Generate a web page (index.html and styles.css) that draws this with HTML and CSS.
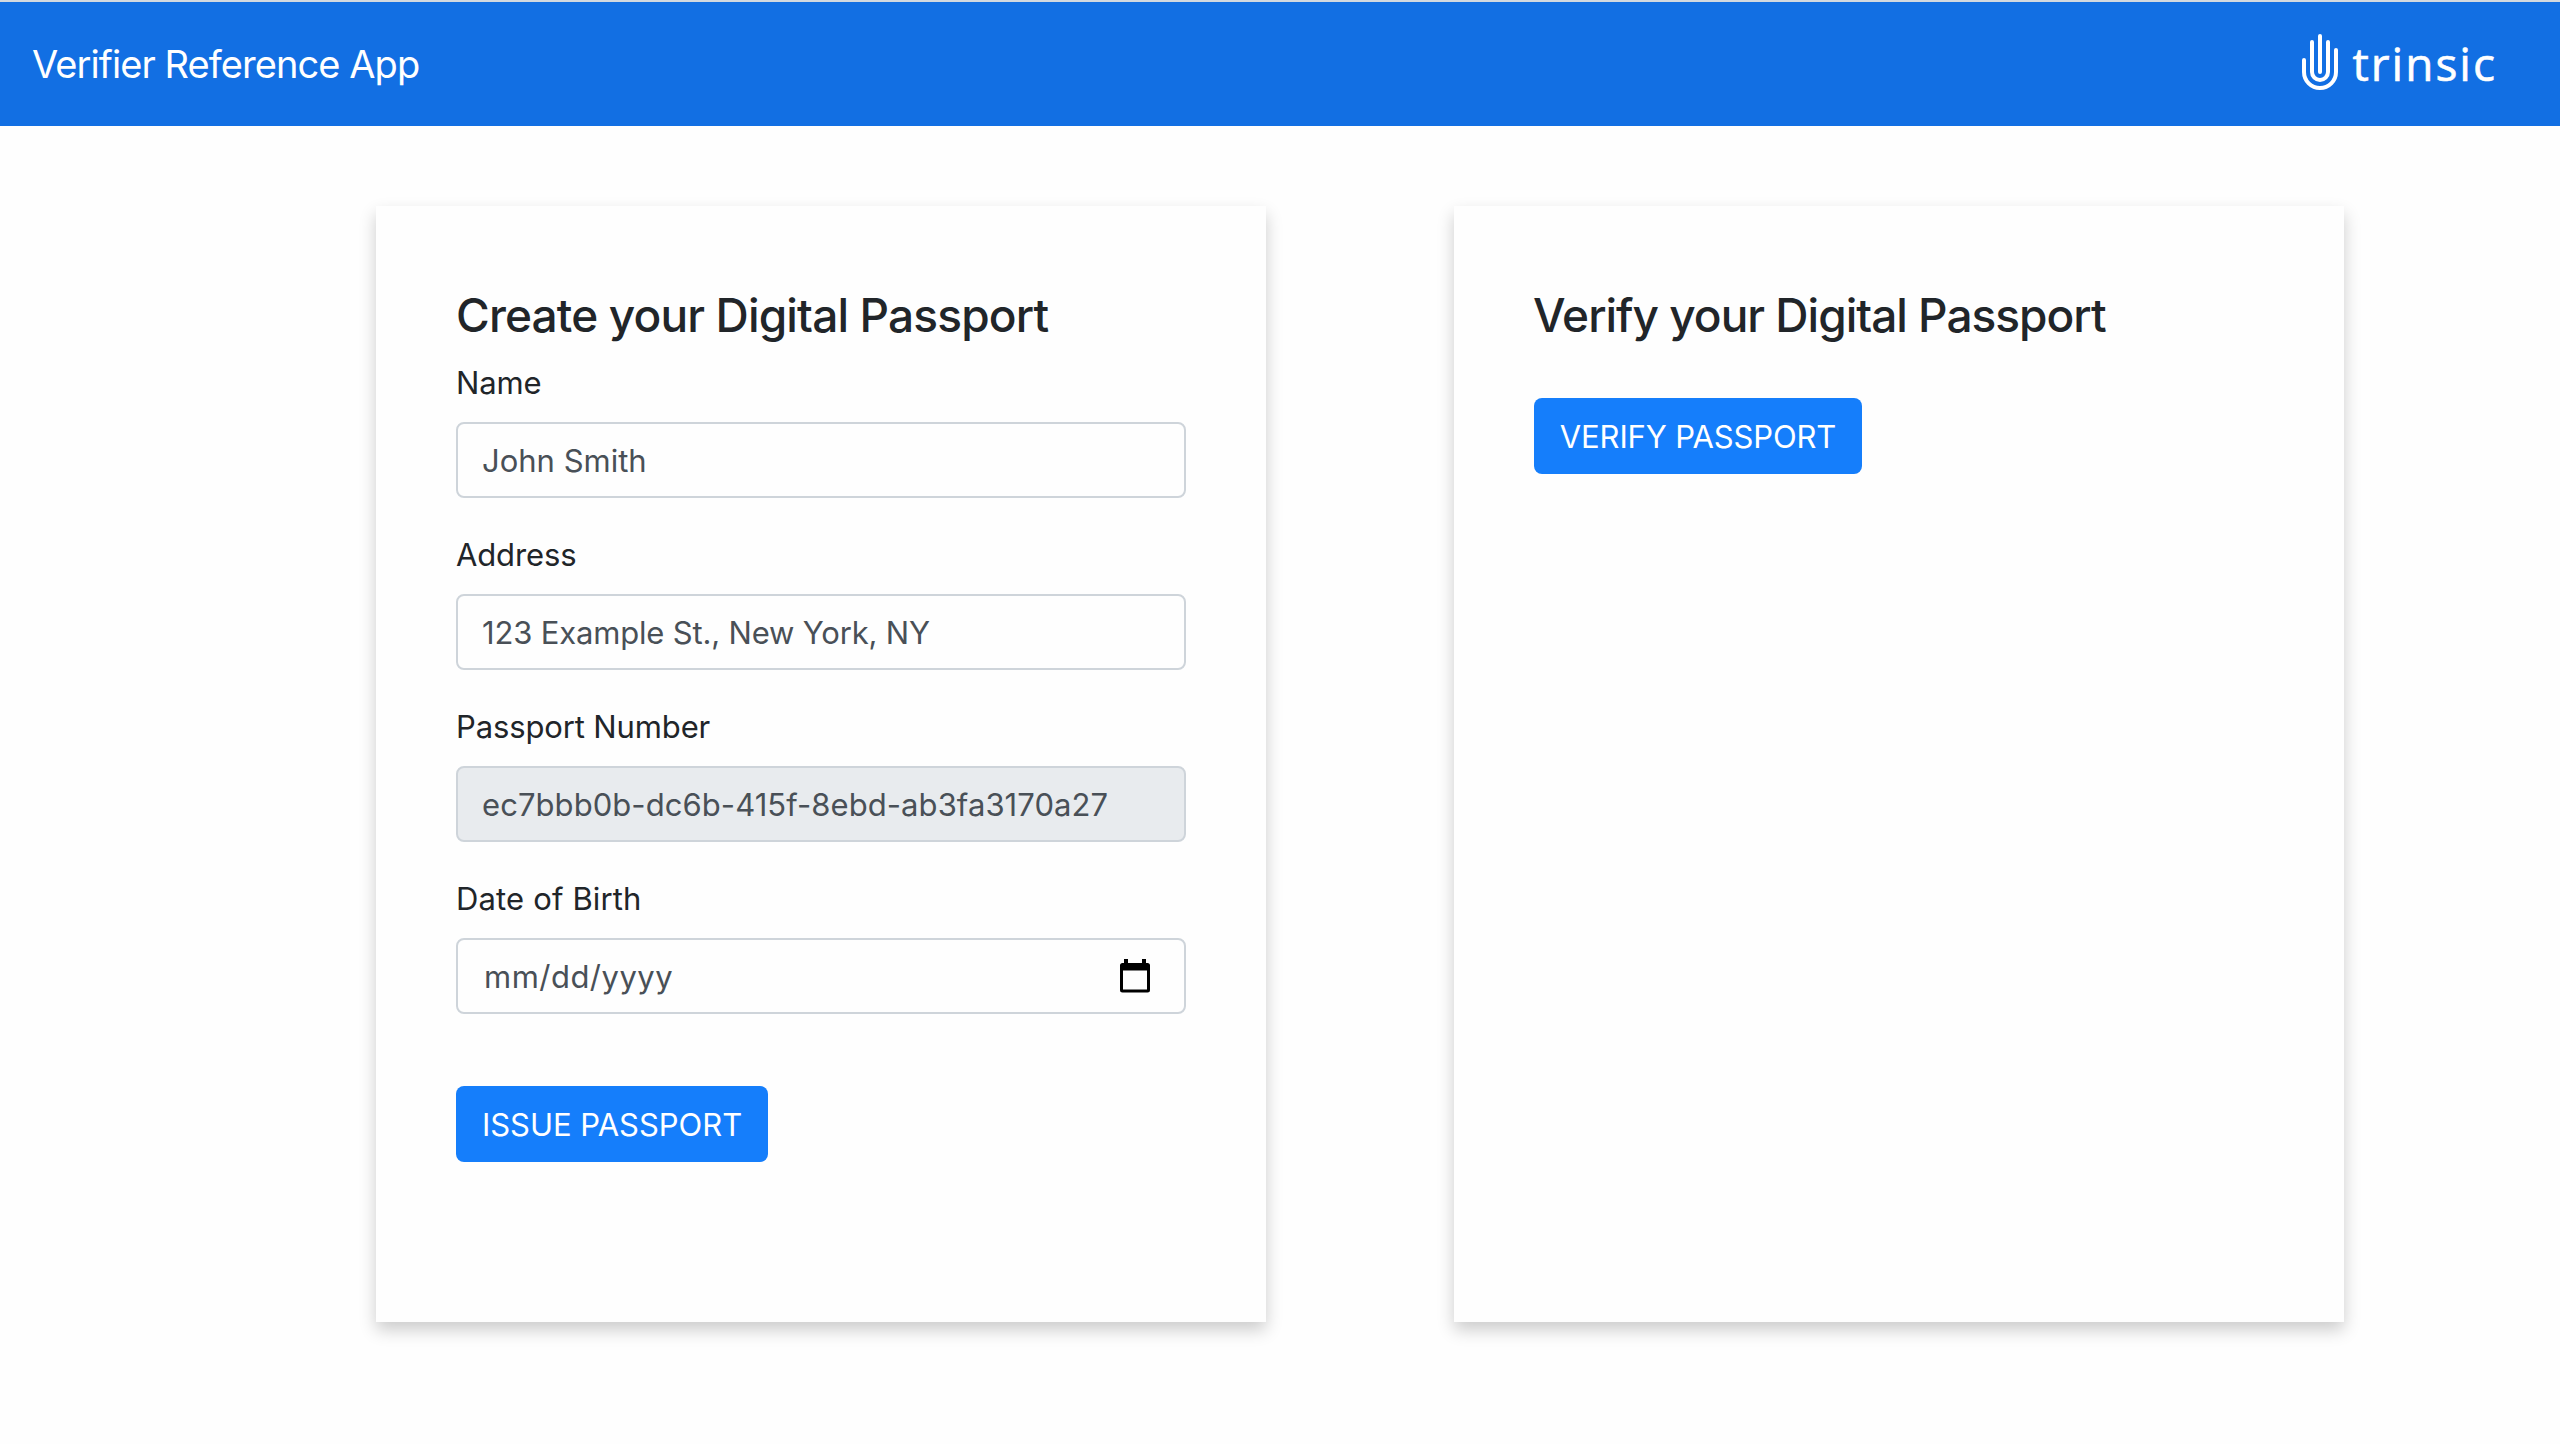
FILE: index.html
```html
<!DOCTYPE html>
<html lang="en">
<head>
<meta charset="utf-8">
<title>Verifier Reference App</title>
<link rel="stylesheet" href="styles.css">
</head>
<body>
<header class="navbar">
  <span class="navbar-title">Verifier Reference App</span>
  <div class="logo">
    <svg class="logo-mark" width="36" height="56" viewBox="0 0 36 56" fill="none" stroke="#fff" stroke-width="4" stroke-linecap="round">
      <path d="M2 26V38a16 16 0 0 0 32 0V16"/>
      <path d="M10 8V38a8 8 0 0 0 16 0V8"/>
      <path d="M18 2V38"/>
    </svg>
    <span class="logo-text">trinsic</span>
  </div>
</header>
<main class="panels">
  <section class="card">
    <h3 class="card-title">Create your Digital Passport</h3>
    <form class="form">
      <div class="field">
        <label class="label label-tight" for="name">Name</label>
        <input class="input" id="name" type="text" placeholder="John Smith">
      </div>
      <div class="field">
        <label class="label label-tight" for="address">Address</label>
        <input class="input input-address" id="address" type="text" placeholder="123 Example St., New York, NY">
      </div>
      <div class="field">
        <label class="label label-tight" for="number">Passport Number</label>
        <input class="input input-readonly" id="number" type="text" value="ec7bbb0b-dc6b-415f-8ebd-ab3fa3170a27" readonly>
      </div>
      <div class="field">
        <label class="label label-wide" for="dob">Date of Birth</label>
        <div class="input input-date" id="dob">
          <span>mm/dd/yyyy</span>
          <svg class="calendar" width="30" height="34" viewBox="0 0 30 34">
            <path fill="#000" fill-rule="evenodd" d="M4 0h4v4h14V0h4v4h1.500a2.500 2.500 0 0 1 2.500 2.500v24.500a2.500 2.500 0 0 1-2.500 2.500H2.500A2.500 2.500 0 0 1 0 31V6.500A2.500 2.500 0 0 1 2.500 4H4zM3 11.500V30.500H27V11.500z"/>
          </svg>
        </div>
      </div>
      <button class="button button-issue" type="button">ISSUE PASSPORT</button>
    </form>
  </section>
  <section class="card">
    <h3 class="card-title card-title-verify">Verify your Digital Passport</h3>
    <button class="button button-verify" type="button">VERIFY PASSPORT</button>
  </section>
</main>
</body>
</html>
```
FILE: styles.css
```css
* {
  box-sizing: border-box;
}

body {
  margin: 0;
  min-height: 1444px;
  background: #fefefe;
  color: #212529;
  font-family: Inter, "Liberation Sans", sans-serif;
  font-size: 31px;
  line-height: 48px;
}

.navbar {
  display: flex;
  align-items: center;
  justify-content: space-between;
  height: 126px;
  padding: 0 63px 0 32px;
  border-top: 2px solid #d3d9df;
  background: #126fe3;
  color: #fff;
}

.navbar-title {
  font-size: 38px;
  letter-spacing: -0.93px;
}

.logo {
  display: flex;
  align-items: center;
  gap: 14px;
}

.logo-mark {
  display: block;
  margin-top: -4px;
}

.logo-text {
  margin-top: -3px;
  font-family: "Open Sans", "Noto Sans", sans-serif;
  font-size: 46px;
  letter-spacing: 2px;
  -webkit-text-stroke: 0.6px #fff;
}

.panels {
  display: flex;
  gap: 188px;
  padding: 80px 216px 0 376px;
}

.card {
  width: 890px;
  height: 1116px;
  padding: 80px;
  background: #fefefe;
  box-shadow: 0 8px 16px rgba(0, 0, 0, 0.2);
}

.card-title {
  height: 56px;
  margin: 0 0 16px;
  padding-top: 1px;
  font-size: 46px;
  font-weight: 500;
  line-height: 56px;
  letter-spacing: -0.85px;
  white-space: nowrap;
}

.card-title-verify {
  margin-bottom: 56px;
  text-indent: -1px;
  letter-spacing: -1px;
}

.form {
  display: flex;
  flex-direction: column;
  align-items: flex-start;
  gap: 32px;
}

.field {
  display: flex;
  flex-direction: column;
  gap: 16px;
  width: 100%;
}

.label {
  height: 48px;
  padding-top: 1px;
}

.label-tight {
  letter-spacing: -0.13px;
}

.label-wide {
  letter-spacing: 0.15px;
}

.input {
  width: 100%;
  height: 76px;
  padding: 0 24px;
  border: 2px solid #ced4da;
  border-radius: 8px;
  background: #fefefe;
  color: #495057;
  font: inherit;
  outline: none;
}

.input::placeholder {
  color: #495057;
  opacity: 1;
}

.input-address {
  letter-spacing: -0.17px;
}

.input-readonly {
  background: #e8ebee;
  letter-spacing: 0.07px;
}

.input-date {
  display: flex;
  align-items: center;
  justify-content: space-between;
  padding: 2px 34px 0 26px;
  letter-spacing: 0.48px;
}

.calendar {
  display: block;
  margin-top: -3px;
}

.button {
  height: 76px;
  padding: 2px 0 0;
  border: 0;
  border-radius: 8px;
  background: #157efb;
  color: #fff;
  font: inherit;
  white-space: nowrap;
}

.button-issue {
  width: 312px;
  margin-top: 40px;
  letter-spacing: -0.03px;
}

.button-verify {
  width: 328px;
  letter-spacing: -0.15px;
}
```
